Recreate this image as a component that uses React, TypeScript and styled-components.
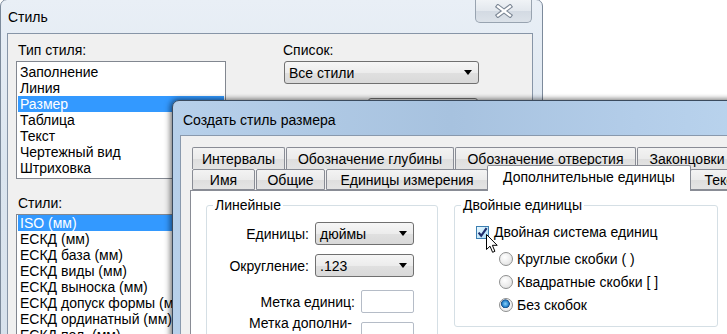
import React from 'react'
import styled, { createGlobalStyle } from 'styled-components'

const GlobalStyle = createGlobalStyle`
  html, body {
    margin: 0;
    padding: 0;
    background: #fff;
  }
  body {
    font-family: 'Liberation Sans', Arial, sans-serif;
    font-size: 14px;
    color: #000;
  }
  * {
    box-sizing: border-box;
  }
`

const styleTypes = ['Заполнение', 'Линия', 'Размер', 'Таблица', 'Текст', 'Чертежный вид', 'Штриховка']
const styles = [
  'ISO (мм)',
  'ЕСКД (мм)',
  'ЕСКД база (мм)',
  'ЕСКД виды (мм)',
  'ЕСКД выноска (мм)',
  'ЕСКД допуск формы (мм)',
  'ЕСКД ординатный (мм)',
  'ЕСКД пол. (мм)',
]

const tabsBack = [
  { label: 'Интервалы', w: 93 },
  { label: 'Обозначение глубины', w: 168 },
  { label: 'Обозначение отверстия', w: 181 },
  { label: 'Законцовки', w: 100 },
]
const tabsFront = [
  { label: 'Имя', w: 63 },
  { label: 'Общие', w: 69 },
  { label: 'Единицы измерения', w: 162 },
  { label: 'Дополнительные единицы', w: 200, selected: true },
  { label: 'Текст', w: 64 },
]

const App: React.FC = () => {
  return (
    <>
      <GlobalStyle />
      <Desktop>
        <StyleWindow>
          <TitleBar $h={33}>
            <TitleText $pad={1}>Стиль</TitleText>
            <CloseButton>
              <svg width="20" height="14" viewBox="0 0 20 14">
                <path d="M4 2.5 L16 11.5 M16 2.5 L4 11.5" stroke="#7d8896" strokeWidth="4.4" strokeLinecap="square" />
                <path d="M4 2.5 L16 11.5 M16 2.5 L4 11.5" stroke="#fff" strokeWidth="2.2" strokeLinecap="square" />
              </svg>
            </CloseButton>
          </TitleBar>
          <StyleClient>
            <Column>
              <FieldLabel>Тип стиля:</FieldLabel>
              <ListBox $pad={2}>
                {styleTypes.map((t) => (
                  <ListItem key={t} $selected={t === 'Размер'}>
                    {t}
                  </ListItem>
                ))}
              </ListBox>
              <FieldLabel $top={16}>Стили:</FieldLabel>
              <ListBox $pad={0}>
                {styles.map((s, i) => (
                  <ListItem key={s} $selected={i === 0}>
                    {s}
                  </ListItem>
                ))}
              </ListBox>
            </Column>
            <Column>
              <FieldLabel $left={-1}>Список:</FieldLabel>
              <Combo $w={195}>
                <span>Все стили</span>
                <Arrow />
              </Combo>
              <PushButton>Изменить...</PushButton>
            </Column>
          </StyleClient>
        </StyleWindow>

        <Dialog>
          <TitleBar $h={34} $active>
            <TitleText $pad={3}>Создать стиль размера</TitleText>
          </TitleBar>
          <DialogClient>
            <Tabs>
              <TabRow>
                {tabsBack.map((t) => (
                  <Tab key={t.label} $w={t.w} $h={22} $back>
                    {t.label}
                  </Tab>
                ))}
              </TabRow>
              <TabRow>
                {tabsFront.map((t) => (
                  <Tab key={t.label} $w={t.w} $h={21} $selected={t.selected}>
                    {t.label}
                  </Tab>
                ))}
              </TabRow>
            </Tabs>
            <Panel>
              <Group $w={232} $padTop={9}>
                <legend>Линейные</legend>
                <FieldRow>
                  <span>Единицы:</span>
                  <Combo $w={99}>
                    <span>дюймы</span>
                    <Arrow />
                  </Combo>
                </FieldRow>
                <FieldRow $top={9}>
                  <span>Округление:</span>
                  <Combo $w={99}>
                    <span>.123</span>
                    <Arrow />
                  </Combo>
                </FieldRow>
                <FieldRow $top={13}>
                  <span>Метка единиц:</span>
                  <TextBox />
                </FieldRow>
                <FieldRow $top={9} $wrap>
                  <span>
                    Метка дополни-
                    <br />
                    тельных единиц:
                  </span>
                  <TextBox />
                </FieldRow>
              </Group>
              <Group $w={264} $padTop={11} $padBottom={10}>
                <legend>Двойные единицы</legend>
                <CheckRow>
                  <CheckBox>
                    <svg width="11" height="11" viewBox="0 0 11 11">
                      <path d="M1.6 5.6 L4.2 8.8 L9.6 1.2" fill="none" stroke="#1f2f6e" strokeWidth="2.2" />
                    </svg>
                    <Cursor width="14" height="20" viewBox="0 0 14 20">
                      <path
                        d="M0.5 0.5 L0.5 15.5 L4 12.2 L6.6 18.3 L8.9 17.3 L6.4 11.3 L11.2 11.3 Z"
                        fill="#fff"
                        stroke="#000"
                        strokeWidth="1"
                      />
                    </Cursor>
                  </CheckBox>
                  <span>Двойная система единиц</span>
                </CheckRow>
                <RadioList>
                  <RadioRow>
                    <Radio />
                    <span>Круглые скобки ( )</span>
                  </RadioRow>
                  <RadioRow>
                    <Radio />
                    <span>Квадратные скобки [ ]</span>
                  </RadioRow>
                  <RadioRow>
                    <Radio $checked />
                    <span>Без скобок</span>
                  </RadioRow>
                </RadioList>
              </Group>
            </Panel>
          </DialogClient>
        </Dialog>
      </Desktop>
    </>
  )
}
export default App

const Desktop = styled.div`
  position: relative;
  width: 727px;
  height: 334px;
  overflow: hidden;
  background: #fff;
`

// inactive window behind
const StyleWindow = styled.div`
  position: absolute;
  left: 0;
  top: -1px;
  width: 543px;
  height: 420px;
  display: flex;
  flex-direction: column;
  padding: 0 9px 8px 6px;
  border: 1px solid #7c8a9b;
  border-radius: 7px 7px 0 0;
  background: linear-gradient(180deg, #e9eff6 0%, #dbe5ef 40%, #d6e0eb 100%);
`

// active dialog on top
const Dialog = styled.div`
  position: absolute;
  left: 172px;
  top: 100px;
  width: 620px;
  height: 300px;
  display: flex;
  flex-direction: column;
  padding: 0 8px 8px 7px;
  border: 1px solid #3b4b5e;
  border-radius: 7px 7px 0 0;
  background: linear-gradient(90deg, #b7d0ea 0%, #a7c2df 45%, #b3cde9 75%, #bcd6ef 100%);
  box-shadow: -2px 0 6px rgba(0, 0, 0, 0.4), 0 -1px 5px rgba(0, 0, 0, 0.3);
`

const TitleBar = styled.div<{ $h: number; $active?: boolean }>`
  height: ${(p) => p.$h}px;
  display: flex;
  align-items: ${(p) => (p.$active ? 'center' : 'flex-start')};
  padding-top: ${(p) => (p.$active ? 3 : 0)}px;
`

const TitleText = styled.div<{ $pad: number }>`
  padding-left: ${(p) => p.$pad}px;
  margin-top: ${(p) => (p.$pad === 1 ? 9 : 0)}px;
  font-size: 14px;
  line-height: 16px;
  white-space: nowrap;
`

const CloseButton = styled.div`
  margin-left: auto;
  margin-right: 1px;
  width: 57px;
  height: 23px;
  display: flex;
  align-items: center;
  justify-content: center;
  border: 1px solid #98a3b0;
  border-top: none;
  border-radius: 0 0 5px 5px;
  background: linear-gradient(180deg, #f0f3f6 0%, #e2e7ed 50%, #d3dae3 51%, #dce2e9 100%);
`

const StyleClient = styled.div`
  flex: 1;
  display: grid;
  grid-template-columns: 210px 195px;
  column-gap: 58px;
  align-items: start;
  padding: 8px;
  background: #f0f0f0;
  border: 1px solid #8795a7;
`

const Column = styled.div`
  display: flex;
  flex-direction: column;
`

const FieldLabel = styled.div<{ $top?: number; $left?: number }>`
  line-height: 16px;
  margin: ${(p) => p.$top ?? 0}px 0 3px ${(p) => p.$left ?? 2}px;
  white-space: nowrap;
`

const ListBox = styled.div<{ $pad: number }>`
  padding: ${(p) => p.$pad}px 1px;
  border: 1px solid #828790;
  background: #fff;
  overflow: hidden;
`

const ListItem = styled.div<{ $selected?: boolean }>`
  height: 16px;
  line-height: 16px;
  padding-left: 2px;
  white-space: nowrap;
  background: ${(p) => (p.$selected ? '#3399ff' : 'transparent')};
  color: ${(p) => (p.$selected ? '#fff' : '#000')};
`

const Combo = styled.div<{ $w: number }>`
  width: ${(p) => p.$w}px;
  height: 23px;
  flex: none;
  display: flex;
  align-items: center;
  justify-content: space-between;
  padding: 0 6px 0 3px;
  border: 1px solid #707070;
  border-radius: 3px;
  background: linear-gradient(180deg, #f6f6f6 0%, #ececec 50%, #e0e0e0 51%, #d9d9d9 100%);
  white-space: nowrap;
  span {
    padding-left: 1px;
  }
`

const Arrow = styled.i`
  width: 0;
  height: 0;
  border-left: 4px solid transparent;
  border-right: 4px solid transparent;
  border-top: 5px solid #000;
`

const PushButton = styled.div`
  align-self: flex-end;
  margin-top: 14px;
  margin-right: 1px;
  width: 110px;
  height: 23px;
  display: flex;
  align-items: center;
  justify-content: center;
  border: 1px solid #707070;
  border-radius: 3px;
  background: linear-gradient(180deg, #f2f2f2 0%, #ebebeb 50%, #dddddd 51%, #cfcfcf 100%);
`

const DialogClient = styled.div`
  flex: 1;
  display: flex;
  flex-direction: column;
  padding: 11px 0 0 9px;
  background: #f0f0f0;
  border: 1px solid #8999ad;
`

const Tabs = styled.div`
  display: flex;
  flex-direction: column;
  margin-left: 2px;
`

const TabRow = styled.div`
  display: flex;
  gap: 1px;
`

const Tab = styled.div<{ $w: number; $h: number; $back?: boolean; $selected?: boolean }>`
  position: relative;
  flex: none;
  width: ${(p) => (p.$selected ? p.$w + 4 : p.$w)}px;
  height: ${(p) => (p.$selected ? p.$h + 5 : p.$h)}px;
  margin: ${(p) => (p.$selected ? '-4px -2px -1px -2px' : '0')};
  z-index: ${(p) => (p.$selected ? 2 : 0)};
  display: flex;
  align-items: center;
  justify-content: center;
  padding-bottom: ${(p) => (p.$selected ? 3 : 0)}px;
  border: 1px solid #898c95;
  border-bottom: ${(p) => (p.$back || p.$selected ? 'none' : '1px solid #898c95')};
  border-radius: 2px 2px 0 0;
  background: ${(p) =>
    p.$selected ? '#fff' : 'linear-gradient(180deg, #f3f3f3 0%, #ebebeb 50%, #dedede 51%, #e4e4e4 100%)'};
  white-space: nowrap;
  overflow: hidden;
`

const Panel = styled.div`
  flex: 1;
  display: flex;
  align-items: flex-start;
  gap: 16px;
  padding: 6px 0 0 15px;
  background: #fff;
  border: 1px solid #898c95;
`

const Group = styled.fieldset<{ $w: number; $padTop: number; $padBottom?: number }>`
  flex: none;
  width: ${(p) => p.$w}px;
  margin: 0;
  padding: ${(p) => p.$padTop}px 23px ${(p) => p.$padBottom ?? 20}px 0;
  min-inline-size: 0;
  border: 1px solid #d5dfe5;
  border-radius: 3px;
  display: flex;
  flex-direction: column;
  legend {
    margin-left: 6px;
    padding: 0 2px;
    line-height: 16px;
    white-space: nowrap;
  }
`

const FieldRow = styled.div<{ $top?: number; $wrap?: boolean }>`
  display: flex;
  justify-content: flex-end;
  align-items: ${(p) => (p.$wrap ? 'flex-start' : 'center')};
  gap: 6px;
  margin-top: ${(p) => p.$top ?? 0}px;
  line-height: 16px;
  white-space: nowrap;
  span {
    text-align: right;
    margin-top: ${(p) => (p.$wrap ? -7 : 0)}px;
    margin-right: ${(p) => (p.$wrap ? 3 : 0)}px;
  }
`

const TextBox = styled.div`
  flex: none;
  width: 53px;
  height: 23px;
  border: 1px solid #b5bcc7;
  border-radius: 2px;
  background: #fff;
`

const CheckRow = styled.div`
  display: flex;
  align-items: center;
  gap: 5px;
  height: 16px;
  padding-left: 21px;
  white-space: nowrap;
`

const CheckBox = styled.div`
  position: relative;
  flex: none;
  width: 13px;
  height: 13px;
  display: flex;
  align-items: center;
  justify-content: center;
  border: 1px solid #3c7fb1;
  background: linear-gradient(135deg, #e9f7fe 0%, #c4e8fa 60%, #a9dcf6 100%);
`

// mouse pointer hovering the checkbox
const Cursor = styled.svg`
  position: absolute;
  left: 9px;
  top: 7px;
  overflow: visible;
`

const RadioList = styled.div`
  display: flex;
  flex-direction: column;
  margin-top: 7px;
  padding-left: 44px;
`

const RadioRow = styled.div`
  display: flex;
  align-items: center;
  gap: 4px;
  height: 23px;
  white-space: nowrap;
`

const Radio = styled.div<{ $checked?: boolean }>`
  flex: none;
  width: 14px;
  height: 14px;
  border-radius: 50%;
  border: 1px solid #8e8f8f;
  background: ${(p) =>
    p.$checked
      ? 'radial-gradient(circle at 45% 40%, #8fd0f7 0%, #2f8fd6 28%, #1a4f8a 42%, #f2f2f2 48%, #e4e4e4 100%)'
      : 'radial-gradient(circle at 40% 35%, #ffffff 0%, #ececec 55%, #d8d8d8 100%)'};
`
